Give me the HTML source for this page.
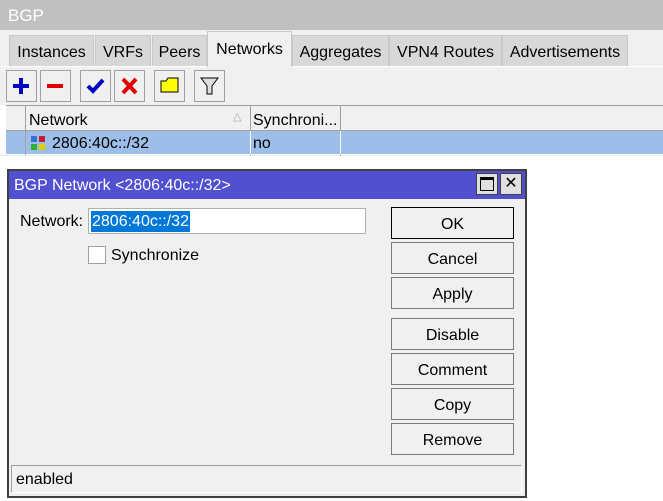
<!DOCTYPE html>
<html><head><style>
*{box-sizing:border-box;margin:0;padding:0}
body{width:663px;height:501px;overflow:hidden;background:#fff;font-family:"Liberation Sans",sans-serif;font-size:16px;color:#000;position:relative}
.a{position:absolute}
.tab{position:absolute;top:35px;height:31px;background:#d8d8d8;border:1px solid #c8c8c8;border-bottom:none;padding:8px 0 0 0;text-align:center}
.tb{position:absolute;top:70px;width:31px;height:32px;background:#f0f0f0;border:1px solid #a0a0a0}
.btn{position:absolute;left:391px;width:123px;height:32px;background:#f0f0f0;border:1px solid #7a7a7a;text-align:center;line-height:33px}
</style></head><body>
<div class="a" style="left:0;top:0;width:663px;height:30px;background:#c0c0c0"></div>
<div class="a" style="left:8px;top:6px;color:#fff;font-size:17px">BGP</div>
<div class="a" style="left:0;top:30px;width:663px;height:75px;background:#f0f0f0"></div>
<div class="tab" style="left:9px;width:85px">Instances</div>
<div class="tab" style="left:95px;width:56px">VRFs</div>
<div class="tab" style="left:152px;width:55px">Peers</div>
<div class="tab" style="left:207px;top:31px;height:36px;width:85px;background:#f0f0f0;padding-top:9px">Networks</div>
<div class="tab" style="left:292px;width:97px">Aggregates</div>
<div class="tab" style="left:389px;width:113px">VPN4 Routes</div>
<div class="tab" style="left:502px;width:126px">Advertisements</div>
<div class="a" style="left:0;top:66px;width:207px;height:1px;background:#fff"></div>
<div class="a" style="left:292px;top:66px;width:371px;height:1px;background:#fff"></div>
<div class="tb" style="left:6px"><svg width="29" height="30"><path d="M14 7v16M6 15h16" stroke="#0000c0" stroke-width="4"/></svg></div>
<div class="tb" style="left:40px"><svg width="29" height="30"><path d="M6 15h16" stroke="#e00000" stroke-width="4"/></svg></div>
<div class="tb" style="left:80px"><svg width="29" height="30"><path d="M7 15l5 5l10-11" stroke="#0000c0" stroke-width="4" fill="none"/></svg></div>
<div class="tb" style="left:114px"><svg width="29" height="30"><path d="M8 8l13 14M21 8l-13 14" stroke="#e00000" stroke-width="4"/></svg></div>
<div class="tb" style="left:154px"><svg width="29" height="30"><path d="M6 10h5l2-3h10v14H6z" fill="#ffff00" stroke="#000"/></svg></div>
<div class="tb" style="left:194px"><svg width="29" height="30"><path d="M6 7h17l-6 8v8h-5v-8z" fill="#ddd" stroke="#000"/></svg></div>
<div class="a" style="left:6px;top:105px;width:657px;height:26px;background:#f0f0f0;border-top:1px solid #a0a0a0;border-bottom:1px solid #a0a0a0"></div>
<div class="a" style="left:25px;top:105px;width:1px;height:50px;background:#a0a0a0"></div>
<div class="a" style="left:250px;top:105px;width:1px;height:50px;background:#a0a0a0"></div>
<div class="a" style="left:340px;top:105px;width:1px;height:50px;background:#a0a0a0"></div>
<div class="a" style="left:29px;top:112px">Network</div>
<div class="a" style="left:233px;top:110px;font-size:11px;color:#aaa">△</div>
<div class="a" style="left:253px;top:112px">Synchroni...</div>
<div class="a" style="left:6px;top:131px;width:657px;height:23px;background:#9dbee8"></div>
<div class="a" style="left:25px;top:131px;width:1px;height:23px;background:#a0a0a0"></div>
<div class="a" style="left:250px;top:131px;width:1px;height:23px;background:#fff"></div>
<div class="a" style="left:340px;top:131px;width:1px;height:23px;background:#fff"></div>
<div class="a" style="left:31px;top:136px;width:6px;height:6px;background:#3a6ed0"></div>
<div class="a" style="left:39px;top:136px;width:6px;height:6px;background:#c02030"></div>
<div class="a" style="left:31px;top:144px;width:6px;height:6px;background:#30b030"></div>
<div class="a" style="left:39px;top:144px;width:6px;height:6px;background:#e0d000"></div>
<div class="a" style="left:52px;top:135px">2806:40c::/32</div>
<div class="a" style="left:253px;top:135px">no</div>
<div class="a" style="left:0;top:155px;width:663px;height:1px;background:#e8e8e8"></div>
<!-- dialog -->
<div class="a" style="left:7px;top:169px;width:520px;height:329px;background:#f0f0f0;border:2px solid #404040"></div>
<div class="a" style="left:9px;top:171px;width:516px;height:28px;background:#5050d0"></div>
<div class="a" style="left:14px;top:177px;color:#fff">BGP Network &lt;2806:40c::/32&gt;</div>
<div class="a" style="left:476px;top:173px;width:22px;height:22px;background:#e0e0e0;border:1px solid #404040"><div style="position:absolute;left:3px;top:3px;width:14px;height:14px;border:1px solid #000;border-top-width:3px"></div></div>
<div class="a" style="left:500px;top:173px;width:22px;height:22px;background:#e0e0e0;border:1px solid #404040;text-align:center;font-size:16px;line-height:20px">✕</div>
<div class="a" style="left:20px;top:213px">Network:</div>
<div class="a" style="left:88px;top:208px;width:278px;height:26px;background:#fff;border:1px solid #b0b0b0"></div>
<div class="a" style="left:91px;top:211px;background:#0078d7;color:#fff;padding:1px 1px 0;line-height:20px">2806:40c::/32</div>
<div class="a" style="left:88px;top:246px;width:18px;height:18px;background:#fff;border:1px solid #a0a0a0"></div>
<div class="a" style="left:111px;top:247px">Synchronize</div>
<div class="btn" style="top:207px;border-color:#000">OK</div>
<div class="btn" style="top:242px">Cancel</div>
<div class="btn" style="top:277px">Apply</div>
<div class="btn" style="top:318px">Disable</div>
<div class="btn" style="top:353px">Comment</div>
<div class="btn" style="top:388px">Copy</div>
<div class="btn" style="top:423px">Remove</div>
<div class="a" style="left:11px;top:465px;width:511px;height:28px;border:1px solid #a0a0a0;border-right-color:#fff;border-bottom-color:#fff;padding:5px 0 0 4px">enabled</div>
</body></html>
